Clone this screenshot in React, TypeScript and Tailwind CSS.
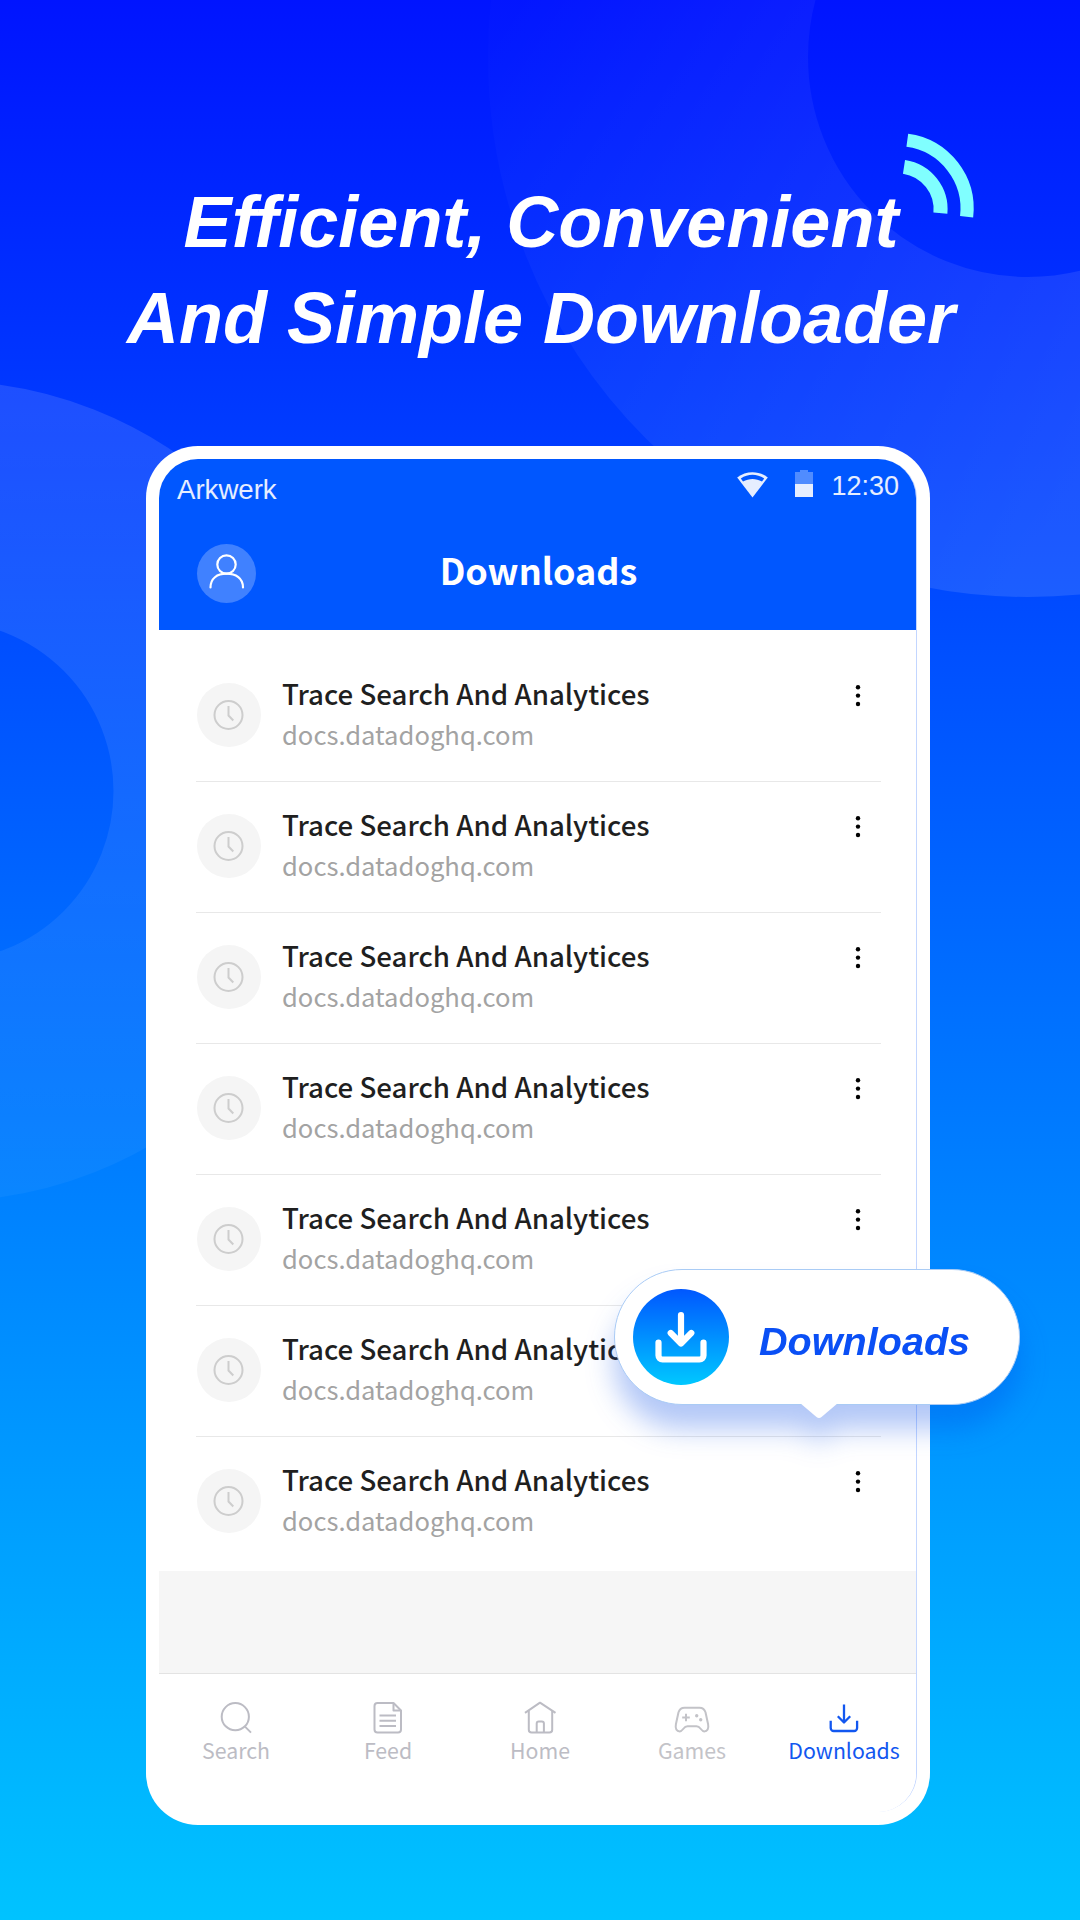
import type { ReactNode } from 'react';

interface Download {
  id: number;
  title: string;
  host: string;
}

interface Tab {
  label: string;
  active?: boolean;
  color: string;
  icon: ReactNode;
}

const downloads: Download[] = Array.from({ length: 7 }, (_, i) => ({
  id: i + 1,
  title: 'Trace Search And Analytices',
  host: 'docs.datadoghq.com',
}));

const tabs: Tab[] = [
  {
    label: 'Search',
    color: 'text-[#bcbcc4]',
    icon: (
      <>
        <circle cx="19.3" cy="18.7" r="13.6" />
        <path d="M29 28.6l6 6" />
      </>
    ),
  },
  {
    label: 'Feed',
    color: 'text-[#bcbcc4]',
    icon: (
      <>
        <path d="M25.500 5H9.500a3 3 0 0 0-3 3v23.500a3 3 0 0 0 3 3h20.500a3 3 0 0 0 3-3V12.500z" />
        <path d="M25.500 5.500v7h7.500" />
        <path d="M11.500 17.500H28M11.500 22.800H28M11.500 28H28" />
      </>
    ),
  },
  {
    label: 'Home',
    color: 'text-[#bcbcc4]',
    icon: (
      <>
        <path d="M5 14.9L20 4.7l15.5 10.2" />
        <path d="M8.8 12.8v18.9a2.8 2.8 0 0 0 2.8 2.8h17.8a2.8 2.8 0 0 0 2.8-2.8V12.8" />
        <path d="M16.7 34.3v-8.8a2 2 0 0 1 2-2h3.2a2 2 0 0 1 2 2v8.8" />
      </>
    ),
  },
  {
    label: 'Games',
    color: 'text-[#c3c3c8]',
    icon: (
      <>
        <path d="M12.5 9.700h15c3 0 5 1.400 6 4.500l2.600 12c.9 4.400-.8 7.200-3.800 7.200-3.400 0-3.600-5.200-7.800-5.200h-9c-4.200 0-4.400 5.200-7.800 5.200-3 0-4.700-2.800-3.800-7.200l2.600-12c1-3.100 3-4.500 6-4.500z" />
        <path d="M14 15.700v7.600M10.200 19.500h7.600" />
        <circle cx="24.700" cy="17.700" r="1.700" fill="currentColor" stroke="none" />
        <circle cx="28.700" cy="21.700" r="1.700" fill="currentColor" stroke="none" />
      </>
    ),
  },
  {
    label: 'Downloads',
    active: true,
    color: 'text-[#1257f0]',
    icon: (
      <>
        <path d="M20 6.500V24M13.800 18.300L20 24.500l6.200-6.200" />
        <path d="M6.700 22.800v7.200a3 3 0 0 0 3 3h20.400a3 3 0 0 0 3-3v-7.200" />
      </>
    ),
  },
];

function Backdrop() {
  return (
    <svg className="absolute inset-0" width="1080" height="1920" viewBox="0 0 1080 1920">
      <defs>
        <linearGradient id="ringRight" gradientUnits="userSpaceOnUse" x1="480" y1="60" x2="1080" y2="480">
          <stop offset="0" stopColor="#fff" stopOpacity="0.01" />
          <stop offset="1" stopColor="#fff" stopOpacity="0.11" />
        </linearGradient>
        <linearGradient id="ringLeft" gradientUnits="userSpaceOnUse" x1="0" y1="385" x2="0" y2="1200">
          <stop offset="0" stopColor="#fff" stopOpacity="0.12" />
          <stop offset="1" stopColor="#fff" stopOpacity="0.04" />
        </linearGradient>
      </defs>
      <circle cx="1028" cy="57" r="380" fill="none" stroke="url(#ringRight)" strokeWidth="320" />
      <circle cx="-56.5" cy="791" r="290" fill="none" stroke="url(#ringLeft)" strokeWidth="240" />
      <g fill="none" stroke="#80ffff">
        <path d="M907.300 140.300A69 69 0 0 1 966.600 216.800" strokeWidth="13.200" />
        <path d="M904 166.800A43 43 0 0 1 940.400 213.200" strokeWidth="14" />
      </g>
    </svg>
  );
}

function StatusBar() {
  return (
    <div className="flex h-[60px] items-start justify-between pl-[18px] pr-[17px] font-['Liberation_Sans',sans-serif] text-white/90">
      <span className="pt-[15px] text-[27.6px] leading-8">Arkwerk</span>
      <div className="flex items-start">
        <svg className="mt-[13px]" width="31" height="26" viewBox="0 0 31 26">
          <path d="M.2 5.500C9-1.600 22-1.600 30.800 5.500L15.500 25.500z" fill="currentColor" />
          <path d="M3.800 6.500C11 1.600 20 1.600 27.200 6.500L25 9.600C19 6 12 6 6 9.600z" fill="#0057ff" />
        </svg>
        <svg className="ml-[27px] mt-[11px]" width="18" height="27" viewBox="0 0 18 27">
          <path d="M5 0h8v2h5v12H0V2h5z" fill="currentColor" opacity="0.35" />
          <path d="M0 14h18v13H0z" fill="currentColor" />
        </svg>
        <span className="ml-[18px] pt-[11px] text-[27px] leading-8">12:30</span>
      </div>
    </div>
  );
}

function Header() {
  return (
    <header className="h-[171px] bg-[#0057ff]">
      <StatusBar />
      <div className="grid grid-cols-[60px_1fr_60px] items-center pl-[38px] pr-[36px] pt-[24px]">
        <div className="h-[59px] w-[59px] rounded-full bg-white/25">
          <svg width="59" height="59" viewBox="0 0 59 59" fill="none" stroke="#fff" strokeWidth="2.200" strokeLinecap="round">
            <circle cx="29.500" cy="20.500" r="9.200" />
            <path d="M13.500 43.500C13.500 34.500 20 29.700 29.500 29.700S46 34.500 46 43.500" />
          </svg>
        </div>
        <h2 className="pb-[9px] text-center text-[36px] font-bold leading-[52px] text-white">Downloads</h2>
      </div>
    </header>
  );
}

function DownloadRow({ item }: { item: Download }) {
  return (
    <li className="flex h-[131px] items-start border-b border-[#e8e8e8] last:border-transparent">
      <div className="ml-px mt-[32px] h-16 w-16 rounded-full bg-[#f5f5f5]">
        <svg width="64" height="64" viewBox="0 0 64 64" fill="none" stroke="#cdcdcd" strokeWidth="2">
          <circle cx="31.500" cy="32" r="14" />
          <path d="M31.500 23v9.500l4.800 5" />
        </svg>
      </div>
      <div className="ml-[21px] flex-1 pt-[22px]">
        <p className="text-[27.7px] font-medium leading-[41px] text-[#1f1f1f]">{item.title}</p>
        <p className="text-[25.6px] leading-10 text-[#a3a3a3]">{item.host}</p>
      </div>
      <svg className="mr-[19px] mt-[32px]" width="8" height="25" viewBox="0 0 8 25" fill="#000">
        <circle cx="4" cy="4.300" r="2.200" />
        <circle cx="4" cy="12.600" r="2.200" />
        <circle cx="4" cy="21" r="2.200" />
      </svg>
    </li>
  );
}

function TabBar() {
  return (
    <nav className="flex flex-1 border-t border-[#e3e3e3] bg-white pl-px pt-[24px]">
      {tabs.map(tab => (
        <div key={tab.label} className={`flex w-[152px] shrink-0 flex-col items-center ${tab.color}`}>
          <svg
            width="40"
            height="40"
            viewBox="0 0 40 40"
            fill="none"
            stroke="currentColor"
            strokeWidth={tab.active ? 2.3 : 2}
            strokeLinejoin="round"
          >
            {tab.icon}
          </svg>
          <span className="-mt-[2px] text-[21.3px] leading-7">{tab.label}</span>
        </div>
      ))}
    </nav>
  );
}

function Phone() {
  return (
    <section className="relative ml-[146px] mt-[80px] h-[1379px] w-[784px] overflow-hidden rounded-[52px] bg-white p-[13px]">
      <div className="flex h-full flex-col overflow-hidden rounded-[39px] border-r border-[#c3d6ff] bg-white font-['Noto_Sans_CJK_SC',sans-serif]">
        <Header />
        <ul className="pb-[3px] pl-[37px] pr-[35px] pt-[21px]">
          {downloads.map(item => (
            <DownloadRow key={item.id} item={item} />
          ))}
        </ul>
        <div className="h-[102px] bg-[#f6f6f6]" />
        <TabBar />
      </div>
    </section>
  );
}

function Callout() {
  return (
    <div className="absolute left-[614px] top-[1269px] drop-shadow-[0_24px_14px_rgba(0,70,230,0.3)]">
      <div className="flex h-[136px] w-[406px] items-center rounded-full border border-[#a9cbf5] bg-white pl-[18px]">
        <svg width="96" height="96" viewBox="0 0 96 96" fill="none">
          <defs>
            <linearGradient id="badge" x1="0" y1="0" x2="0" y2="1">
              <stop offset="0" stopColor="#0057ff" />
              <stop offset="1" stopColor="#00c8ff" />
            </linearGradient>
          </defs>
          <circle cx="48" cy="48" r="48" fill="url(#badge)" />
          <g stroke="#fff" strokeWidth="6.200" strokeLinecap="round" strokeLinejoin="round">
            <path d="M48 26v28M37.700 44L48 54.500 58.300 44" />
            <path d="M25.500 53.500v13a4 4 0 0 0 4 4h37a4 4 0 0 0 4-4v-13" />
          </g>
        </svg>
        <span className="ml-[30px] pt-[8px] font-['Liberation_Sans',sans-serif] text-[39.6px] font-bold italic leading-[48px] text-[#0a4ff5]">
          Downloads
        </span>
      </div>
      <svg className="absolute left-[186px] top-[134px]" width="38" height="16" viewBox="0 0 38 16">
        <path d="M0 0h38L21.500 14a4 4 0 0 1-5 0z" fill="#fff" />
      </svg>
    </div>
  );
}

export default function App() {
  return (
    <main className="relative h-[1920px] w-[1080px] overflow-hidden bg-linear-to-b/srgb from-[#0014ff] to-[#00c3ff]">
      <Backdrop />
      <h1 className="relative pl-[2px] pt-[174px] text-center font-['Liberation_Sans',sans-serif] text-[72px] font-bold italic leading-[96px] text-white">
        Efficient, Convenient
        <br />
        And Simple Downloader
      </h1>
      <Phone />
      <Callout />
    </main>
  );
}
